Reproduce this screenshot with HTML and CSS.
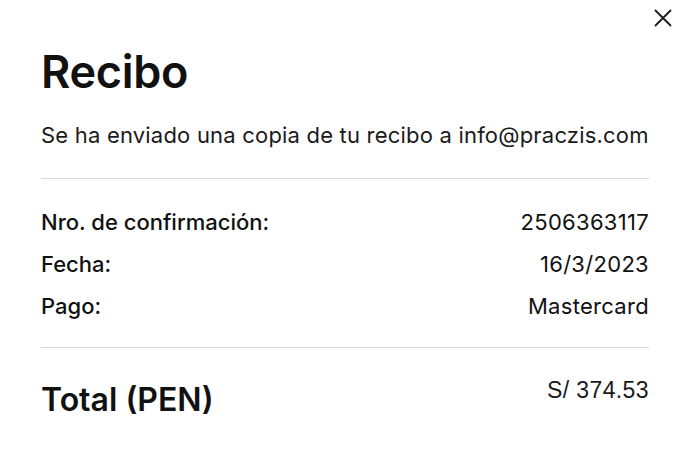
FILE: index.html
```html
<!DOCTYPE html>
<html lang="es">
<head>
<meta charset="utf-8">
<link rel="stylesheet" href="styles.css">
</head>
<body>
<div class="modal">
  <button class="close" aria-label="Cerrar">
    <svg width="20" height="20" viewBox="0 0 20 20"><path d="M2 2 L18 18 M18 2 L2 18" stroke="#1a1a1a" stroke-width="1.8" fill="none"/></svg>
  </button>
  <h1 class="title">Recibo</h1>
  <p class="sub">Se ha enviado una copia de tu recibo a info@praczis.com</p>
  <hr class="rule rule-top">
  <div class="rows">
    <div class="row"><span class="label">Nro. de confirmación:</span><span class="value">2506363117</span></div>
    <div class="row"><span class="label">Fecha:</span><span class="value">16/3/2023</span></div>
    <div class="row"><span class="label">Pago:</span><span class="value">Mastercard</span></div>
  </div>
  <hr class="rule">
  <div class="total">
    <span class="total-label">Total (PEN)</span>
    <span class="total-value">S/ 374.53</span>
  </div>
</div>
</body>
</html>
```
FILE: styles.css
```css
html, body { margin: 0; padding: 0; background: #fff; }
body { font-family: Inter, "Noto Sans", sans-serif; color: #111; }
.modal { position: relative; width: 682px; height: 469px; box-sizing: border-box; padding: 44px 33px 0 41px; }
.close { position: absolute; top: 8px; right: 9px; background: none; border: 0; padding: 0; width: 20px; height: 20px; }
.close svg { display: block; }
.title { margin: 0; font-size: 45px; font-weight: 600; line-height: 56px; letter-spacing: -0.3px; }
.sub { margin: 21px 0 0; font-size: 22px; line-height: 28px; font-weight: 400; color: #1a1a1a; white-space: nowrap; letter-spacing: 0.2px; }
.rule { border: 0; border-top: 1px solid #d7d7d7; margin: 0; }
.rule-top { margin-top: 29px; }
.rows { display: flex; flex-direction: column; gap: 14px; padding: 29px 0 27px; }
.row { display: flex; justify-content: space-between; font-size: 22px; line-height: 28px; }
.label { font-weight: 500; }
.value { font-weight: 400; letter-spacing: 0.3px; }
.total { display: flex; justify-content: space-between; align-items: flex-start; padding-top: 32px; }
.total-label { font-size: 32px; font-weight: 600; line-height: 40px; }
.total-value { font-family: "Liberation Sans", Arial, sans-serif; font-size: 23px; line-height: 20px; letter-spacing: 0.4px; color: #1a1a1a; }
```
